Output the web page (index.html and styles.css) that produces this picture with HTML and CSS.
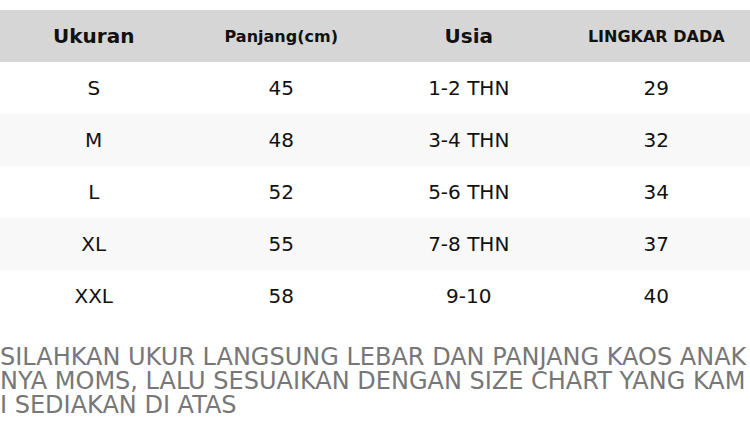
FILE: index.html
```html
<!DOCTYPE html>
<html lang="id">
<head>
<meta charset="utf-8">
<title>Size Chart</title>
<link rel="stylesheet" href="styles.css">
</head>
<body>
<div class="page">
  <table class="chart">
    <thead>
      <tr>
        <th class="big">Ukuran</th>
        <th class="small">Panjang(cm)</th>
        <th class="big">Usia</th>
        <th class="small">LINGKAR DADA</th>
      </tr>
    </thead>
    <tbody>
      <tr><td>S</td><td>45</td><td>1-2 THN</td><td>29</td></tr>
      <tr><td>M</td><td>48</td><td>3-4 THN</td><td>32</td></tr>
      <tr><td>L</td><td>52</td><td>5-6 THN</td><td>34</td></tr>
      <tr><td>XL</td><td>55</td><td>7-8 THN</td><td>37</td></tr>
      <tr><td>XXL</td><td>58</td><td>9-10</td><td>40</td></tr>
    </tbody>
  </table>
  <p class="note">SILAHKAN UKUR LANGSUNG LEBAR DAN PANJANG KAOS ANAKNYA MOMS, LALU SESUAIKAN DENGAN SIZE CHART YANG KAMI SEDIAKAN DI ATAS</p>
</div>
</body>
</html>
```

FILE: styles.css
```css
html, body {
  margin: 0;
  padding: 0;
  background: #ffffff;
}

body {
  font-family: "DejaVu Sans", sans-serif;
  color: #111111;
}

.page {
  width: 750px;
  padding-top: 10px;
}

.chart {
  width: 750px;
  border-collapse: collapse;
  table-layout: fixed;
}

.chart th,
.chart td {
  width: 25%;
  height: 52px;
  padding: 0;
  text-align: center;
  vertical-align: middle;
}

.chart thead tr {
  background: #d6d6d6;
}

.chart th {
  font-weight: bold;
  color: #111111;
}

.chart th.big {
  font-size: 20px;
}

.chart th.small {
  font-size: 16px;
}

.chart td {
  font-size: 20px;
  font-weight: normal;
}

.chart tbody tr:nth-child(even) {
  background: #f8f8f8;
}

.note {
  margin: 23px 0 0 0;
  font-size: 24px;
  line-height: 24px;
  color: #777777;
  word-break: break-all;
}
```
